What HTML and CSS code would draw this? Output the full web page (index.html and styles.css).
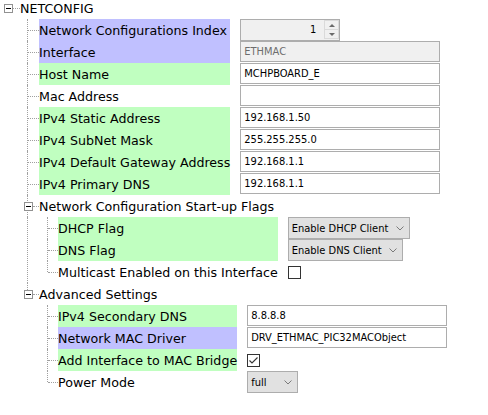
FILE: index.html
```html
<!DOCTYPE html>
<html>
<head>
<meta charset="utf-8">
<title>NETCONFIG</title>
<link rel="stylesheet" href="styles.css">
</head>
<body>
<div class="tree">
  <div class="root">
    <span class="tbox"></span><span class="hdots"></span><span class="rlabel">NETCONFIG</span>
  </div>
  <div class="kids">
    <div class="grid g1">
      <span class="c"></span><span class="lbl purple">Network Configurations Index</span>
      <span class="val"><span class="spin"><span class="num">1</span><span class="sb"><span class="arr up"></span><span class="arr down"></span></span></span></span>

      <span class="c"></span><span class="lbl purple">Interface</span>
      <span class="val"><span class="in dis">ETHMAC</span></span>

      <span class="c"></span><span class="lbl green">Host Name</span>
      <span class="val"><span class="in">MCHPBOARD_E</span></span>

      <span class="c"></span><span class="lbl">Mac Address</span>
      <span class="val"><span class="in"></span></span>

      <span class="c"></span><span class="lbl green">IPv4 Static Address</span>
      <span class="val"><span class="in">192.168.1.50</span></span>

      <span class="c"></span><span class="lbl green">IPv4 SubNet Mask</span>
      <span class="val"><span class="in">255.255.255.0</span></span>

      <span class="c"></span><span class="lbl green">IPv4 Default Gateway Address</span>
      <span class="val"><span class="in">192.168.1.1</span></span>

      <span class="c"></span><span class="lbl green">IPv4 Primary DNS</span>
      <span class="val"><span class="in">192.168.1.1</span></span>
    </div>

    <div class="grow">
      <span class="c"><span class="tbox"></span></span><span class="glabel">Network Configuration Start-up Flags</span>
    </div>
    <div class="sub bar">
      <div class="grid g2">
        <span class="c c2"></span><span class="lbl green">DHCP Flag</span>
        <span class="val"><span class="sel w-dhcp"><span class="stext">Enable DHCP Client</span><svg class="chev" width="8" height="5" viewBox="0 0 8 5"><path d="M0.5 0.5 L4 4 L7.5 0.5" fill="none" stroke="#7a7a7a" stroke-width="1"/></svg></span></span>

        <span class="c c2"></span><span class="lbl green">DNS Flag</span>
        <span class="val"><span class="sel w-dns"><span class="stext">Enable DNS Client</span><svg class="chev" width="8" height="5" viewBox="0 0 8 5"><path d="M0.5 0.5 L4 4 L7.5 0.5" fill="none" stroke="#7a7a7a" stroke-width="1"/></svg></span></span>

        <span class="c c2 last"></span><span class="lbl">Multicast Enabled on this Interface</span>
        <span class="val mid"><span class="cb"></span></span>
      </div>
    </div>

    <div class="grow">
      <span class="c last"><span class="tbox"></span></span><span class="glabel">Advanced Settings</span>
    </div>
    <div class="sub">
      <div class="grid g2">
        <span class="c c2"></span><span class="lbl green">IPv4 Secondary DNS</span>
        <span class="val"><span class="in">8.8.8.8</span></span>

        <span class="c c2"></span><span class="lbl purple">Network MAC Driver</span>
        <span class="val"><span class="in">DRV_ETHMAC_PIC32MACObject</span></span>

        <span class="c c2"></span><span class="lbl green">Add Interface to MAC Bridge</span>
        <span class="val mid"><span class="cb"><svg width="11" height="11" viewBox="0 0 11 11"><path d="M1.5 5.5 L4 8 L9.5 2.5" fill="none" stroke="#333" stroke-width="1.1"/></svg></span></span>

        <span class="c c2 last"></span><span class="lbl">Power Mode</span>
        <span class="val"><span class="sel w-pow"><span class="stext">full</span><svg class="chev" width="8" height="5" viewBox="0 0 8 5"><path d="M0.5 0.5 L4 4 L7.5 0.5" fill="none" stroke="#7a7a7a" stroke-width="1"/></svg></span></span>
      </div>
    </div>
  </div>
</div>
</body>
</html>
```
FILE: styles.css
```css
html, body {
  margin: 0;
  padding: 0;
  background: #ffffff;
}
body {
  font-family: "DejaVu Sans", Verdana, sans-serif;
  font-size: 12.65px;
  color: #000000;
}

.tree {
  display: flex;
  flex-direction: column;
}

/* root node */
.root {
  display: flex;
  align-items: center;
  height: 17px;
  padding-left: 4px;
}
.root .hdots {
  width: 7px;
  height: 0;
  border-top: 1px dotted #a0a0a0;
}
.rlabel {
  line-height: 17px;
  white-space: nowrap;
}

/* expand / collapse box */
.tbox {
  flex: none;
  width: 9px;
  height: 9px;
  box-sizing: border-box;
  border: 1px solid #919191;
  background: #ffffff;
  display: flex;
  align-items: center;
  justify-content: center;
}
.tbox::after {
  content: "";
  width: 5px;
  height: 1px;
  background: #000000;
}

.kids {
  padding-top: 2px;
  margin-left: 27px;
}

/* connector cell */
.c {
  display: flex;
  align-items: flex-start;
  width: 12px;
  height: 22px;
  box-sizing: border-box;
  border-left: 1px dotted #a0a0a0;
}
.c::after {
  content: "";
  flex: 1;
  height: 0;
  margin-top: 11px;
  border-top: 1px dotted #a0a0a0;
}
.c.last {
  border-left: none;
}
.c.last::before {
  content: "";
  width: 0;
  height: 11px;
  border-left: 1px dotted #a0a0a0;
}
.c.c2 {
  width: 11px;
}
.c .tbox {
  margin-left: -4px;
  margin-top: 7px;
}

/* grids of properties */
.grid {
  display: grid;
  justify-content: start;
  grid-auto-rows: 22px;
}
.g1 {
  grid-template-columns: 12px max-content max-content;
}
.g2 {
  grid-template-columns: 11px max-content max-content;
}
.lbl {
  box-sizing: border-box;
  height: 22px;
  padding-top: 2px;
  line-height: 20px;
  white-space: nowrap;
}
.purple {
  background: #c0c0ff;
}
.green {
  background: #c0ffc0;
}
.val {
  padding-left: 10px;
  display: flex;
  align-items: flex-start;
}
.val.mid {
  align-items: center;
}

/* group rows */
.grow {
  display: flex;
  height: 22px;
}
.glabel {
  box-sizing: border-box;
  height: 22px;
  padding-top: 2px;
  line-height: 20px;
  white-space: nowrap;
}
.sub {
  padding-left: 20px;
}
.sub.bar {
  border-left: 1px dotted #a0a0a0;
  padding-left: 19px;
}

/* value widgets */
.in {
  display: block;
  width: 200px;
  height: 21px;
  box-sizing: border-box;
  border: 1px solid #adadad;
  background: #ffffff;
  font-family: "DejaVu Sans Condensed", "DejaVu Sans", sans-serif;
  font-size: 11px;
  line-height: 20px;
  padding-left: 3px;
  white-space: nowrap;
  color: #000000;
  overflow: hidden;
}
.in.dis {
  background: #f0f0f0;
  color: #6d6d6d;
}

.spin {
  display: flex;
  width: 100px;
  height: 22px;
  box-sizing: border-box;
  border: 1px solid #adadad;
  background: #f0f0f0;
  font-family: "DejaVu Sans Condensed", "DejaVu Sans", sans-serif;
  font-size: 11px;
}
.spin .num {
  flex: 1;
  text-align: right;
  line-height: 20px;
  padding-right: 8px;
  color: #000000;
}
.sb {
  display: flex;
  flex-direction: column;
  width: 15px;
  margin: 0 0 1px 0;
  border: 1px solid #dadada;
  box-sizing: border-box;
}
.arr {
  flex: 1;
  display: flex;
  align-items: center;
  justify-content: center;
}
.arr.up {
  border-bottom: 1px solid #dadada;
}
.arr.up::after {
  content: "";
  border-left: 3px solid transparent;
  border-right: 3px solid transparent;
  border-bottom: 3px solid #6a6a6a;
}
.arr.down::after {
  content: "";
  border-left: 3px solid transparent;
  border-right: 3px solid transparent;
  border-top: 3px solid #6a6a6a;
}

.sel {
  display: flex;
  align-items: center;
  height: 22px;
  box-sizing: border-box;
  border: 1px solid #adadad;
  background: #e1e1e1;
  padding: 0 5px 0 3px;
  font-family: "DejaVu Sans Condensed", "DejaVu Sans", sans-serif;
  font-size: 11px;
  white-space: nowrap;
}
.sel .chev {
  margin-left: auto;
  flex: none;
}
.w-dhcp {
  width: 122px;
}
.w-dns {
  width: 115px;
}
.w-pow {
  width: 51px;
}

.cb {
  display: flex;
  align-items: center;
  justify-content: center;
  width: 13px;
  height: 13px;
  box-sizing: border-box;
  border: 1px solid #333333;
  background: #ffffff;
}
```
